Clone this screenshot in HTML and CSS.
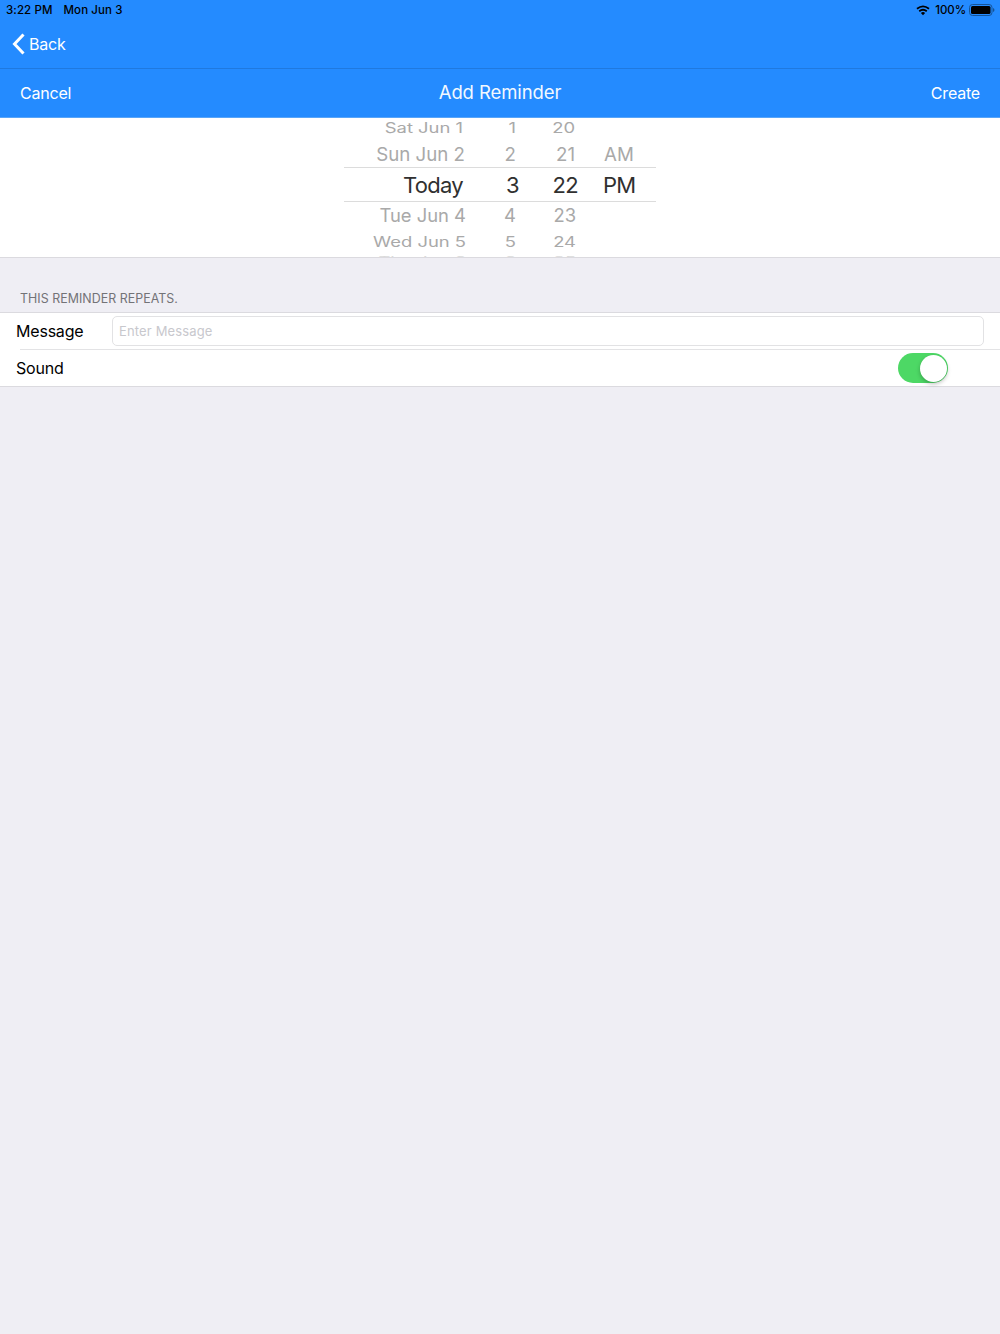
FILE: index.html
```html
<!DOCTYPE html>
<html lang="en">
<head>
    <meta charset="UTF-8">
    <meta name="viewport" content="width=device-width, initial-scale=1.0">
    <title>Add Reminder</title>
    <link rel="stylesheet" href="styles.css">
</head>
<body>
    <div class="status-bar">
        <span class="time">3:22 PM</span>
        <span class="date">Mon Jun 3</span>
        <svg class="wifi" width="14" height="11" viewBox="0 0 14 11">
            <path d="M1 3.8Q7-1 13 3.8M3.2 6.2Q7 3.2 10.8 6.2" fill="none" stroke="#000" stroke-width="1.8"/>
            <path d="M4.9 7.9Q7 6.3 9.1 7.9L7 10.2Z"/>
        </svg>
        <span class="percent">100%</span>
        <svg class="battery" width="26" height="12" viewBox="0 0 26 12">
            <rect x=".5" y=".5" width="22.5" height="11" rx="3" fill="none" stroke="#155498"/>
            <rect x="2" y="2" width="19.5" height="8" rx="1.5"/>
            <path d="M24 4Q25.5 4.5 25.5 6T24 8Z" fill="#155498"/>
        </svg>
    </div>
    <nav class="nav-bar">
        <a href="#" class="back">
            <svg width="13" height="22" viewBox="0 0 13 22">
                <path d="M11.5 1.5L2.5 11L11.5 20.5" fill="none" stroke="#fff" stroke-width="3"/>
            </svg>
            <span>Back</span>
        </a>
    </nav>
    <header class="title-bar">
        <a href="#" class="cancel">Cancel</a>
        <h1>Add Reminder</h1>
        <a href="#" class="create">Create</a>
    </header>

    <div class="picker">
        <div class="row far-top"><span class="day">Sat Jun 1</span><span class="hour">1</span><span class="minute">20</span><span class="period"></span></div>
        <div class="row near-top"><span class="day">Sun Jun 2</span><span class="hour">2</span><span class="minute">21</span><span class="period">AM</span></div>
        <div class="row selected"><span class="day">Today</span><span class="hour">3</span><span class="minute">22</span><span class="period">PM</span></div>
        <div class="row near-bottom"><span class="day">Tue Jun 4</span><span class="hour">4</span><span class="minute">23</span><span class="period"></span></div>
        <div class="row far-bottom"><span class="day">Wed Jun 5</span><span class="hour">5</span><span class="minute">24</span><span class="period"></span></div>
        <div class="row edge"><span class="day">Thu Jun 6</span><span class="hour">6</span><span class="minute">25</span><span class="period"></span></div>
    </div>

    <h2>THIS REMINDER REPEATS.</h2>
    <div class="form">
        <div class="field message">
            <label for="message">Message</label>
            <input type="text" id="message" placeholder="Enter Message">
        </div>
        <div class="field sound">
            <span class="label">Sound</span>
            <span class="switch"><span class="knob"></span></span>
        </div>
    </div>
</body>
</html>
```
FILE: styles.css
```css
* {
    box-sizing: border-box;
}
body {
    margin: 0;
    min-height: 100vh;
    font-family: 'Inter', sans-serif;
    background: #efeef4;
    color: #000;
}
a {
    color: white;
    text-decoration: none;
}
.status-bar {
    display: flex;
    align-items: center;
    height: 20px;
    padding: 0 5px 0 6px;
    background: #248bff;
    font-size: 11.5px;
    font-weight: 500;
    letter-spacing: 0.1px;
}
.date {
    margin-left: 11px;
}
.wifi {
    margin-left: auto;
}
.percent {
    margin: 0 3px 0 5px;
    letter-spacing: -0.1px;
}
.nav-bar {
    height: 49px;
    padding: 13px 12px 0;
    background: #248bff;
    border-bottom: 1px solid #1f79df;
}
.back {
    display: flex;
    align-items: center;
    gap: 4px;
    height: 22px;
    font-size: 16px;
    letter-spacing: -0.2px;
}
.title-bar {
    display: flex;
    justify-content: space-between;
    align-items: center;
    height: 49px;
    padding: 0 20px;
    background: #248bff;
    border-bottom: 1px solid #59a5f8;
    font-size: 16px;
    letter-spacing: -0.2px;
}
h1 {
    margin: 0 0 2px;
    font-size: 18.5px;
    font-weight: 400;
    color: #f2f8ff;
    letter-spacing: -0.1px;
}
.cancel, .create {
    width: 100px;
}
.create {
    text-align: right;
}
.picker {
    height: 140px;
    overflow: hidden;
    background: white;
    border-bottom: 1px solid #dbdadf;
    color: #a9a9a9;
}
.row {
    display: flex;
    align-items: center;
    width: 312px;
    margin: 0 auto;
    white-space: nowrap;
}
.row span {
    text-align: right;
    transform-origin: right center;
}
.day {
    width: 122px;
}
.hour {
    width: 50px;
}
.minute {
    width: 60px;
}
.row .period {
    width: 70px;
    padding-left: 28px;
    text-align: left;
}
.far-top {
    height: 20px;
    font-size: 18.4px;
}
.far-top .day {
    padding-right: 3px;
}
.far-top .minute {
    padding-right: 1px;
}
.far-top span {
    transform: scaleY(0.75);
}
.near-top {
    height: 29px;
    padding-top: 4px;
    font-size: 18.7px;
}
.near-top .day {
    padding-right: 1px;
}
.near-top .minute {
    padding-right: 1px;
}
.selected {
    height: 35px;
    border-top: 1px solid #dcdcdc;
    border-bottom: 1px solid #dcdcdc;
    font-size: 22px;
    font-weight: 400;
    letter-spacing: -0.7px;
    color: #303030;
}
.selected .day {
    padding-right: 3px;
}
.selected .hour {
    width: 53px;
}
.selected .minute {
    padding-right: 1px;
}
.selected .period {
    width: 67px;
    padding-left: 24px;
}
.near-bottom {
    height: 27px;
    padding-bottom: 1px;
    font-size: 18.4px;
}
.far-bottom {
    height: 25px;
    font-size: 18.4px;
}
.far-bottom span {
    transform: scaleY(0.75);
}
.edge {
    height: 10px;
    font-size: 18.4px;
    color: #dadada;
}
.edge span {
    transform: scaleY(0.5);
}
h2 {
    height: 54px;
    margin: 0;
    padding: 33px 20px 0;
    font-size: 12.4px;
    font-weight: 400;
    line-height: 16px;
    letter-spacing: 0.05px;
    color: #737377;
}
.form {
    height: 75px;
    background: white;
    border-top: 1px solid #dbdadf;
    border-bottom: 1px solid #dbdadf;
}
.field {
    display: flex;
    align-items: center;
    height: 36px;
    padding: 0 16px;
    font-size: 16px;
    letter-spacing: -0.2px;
}
.message label {
    width: 96px;
}
.message input {
    flex: 1;
    height: 30px;
    padding: 0 6px;
    border: 1px solid #e2e2e4;
    border-radius: 5px;
    outline: none;
    background: white;
    font: 13px 'Inter', sans-serif;
    letter-spacing: 0.15px;
}
.message input::placeholder {
    color: #c8c8cd;
}
.sound {
    justify-content: space-between;
    height: 37px;
    margin-left: 20px;
    padding: 0 52px 0 0;
    border-top: 1px solid #e3e3e5;
}
.sound .label {
    margin-left: -4px;
}
.switch {
    display: flex;
    justify-content: flex-end;
    width: 50px;
    height: 30px;
    padding: 1.5px;
    border-radius: 15px;
    background: #4dd865;
}
.knob {
    width: 27px;
    height: 27px;
    border-radius: 50%;
    background: white;
    box-shadow: 0 2px 4px rgba(0, 0, 0, 0.25);
}
```
